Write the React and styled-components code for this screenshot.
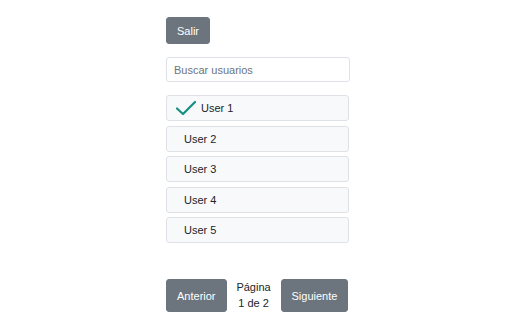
import React from "react";
import styled, { createGlobalStyle } from "styled-components";

const GlobalStyle = createGlobalStyle`
  body {
    margin: 0;
    background: #fff;
    font-family: "Liberation Sans", Arial, sans-serif;
    color: #212529;
  }
`;

const Page = styled.div`
  display: flex;
  justify-content: center;
  padding: 17px 0 0 4px;
`;

const Column = styled.div`
  width: 184px;
  display: flex;
  flex-direction: column;
  align-items: flex-start;
`;

const Button = styled.button`
  height: ${(p) => p.tall ? "33px" : "27px"};
  padding: 0 10px;
  background: #6c757d;
  color: #fff;
  border: 1px solid #6c757d;
  border-radius: 3px;
  font-family: inherit;
  font-size: 11px;
`;

const Search = styled.input`
  box-sizing: border-box;
  width: 184px;
  height: 25px;
  margin-top: 13px;
  padding: 0 7px;
  border: 1px solid #dee2e6;
  border-radius: 3px;
  font-family: inherit;
  font-size: 11px;
  &::placeholder {
    color: #6c757d;
  }
`;

const List = styled.ul`
  list-style: none;
  margin: 13px 0 0;
  padding: 0;
  width: 183px;
  display: flex;
  flex-direction: column;
  gap: 4.5px;
`;

const Item = styled.li`
  box-sizing: border-box;
  height: 26px;
  display: flex;
  align-items: center;
  gap: 4px;
  padding-left: ${(p) => p.selected ? "8px" : "17px"};
  background: #f8f9fa;
  border: 1px solid #dee2e6;
  border-radius: 3px;
  font-size: 11px;
`;

const Pager = styled.div`
  display: flex;
  align-items: center;
  margin-top: 36px;
`;

const PageLabel = styled.div`
  width: 54px;
  text-align: center;
  font-size: 11px;
  line-height: 16px;
  margin-top: -2px;
`;

const Check = () => (
  <svg width="22" height="18" viewBox="0 0 22 18" fill="none">
    <path d="M2 9.5 L8 15 L20 3" stroke="#138f83" strokeWidth="2.2" strokeLinecap="round" strokeLinejoin="round" />
  </svg>
);

const users = ["User 1", "User 2", "User 3", "User 4", "User 5"];

export default function App() {
  return (
    <>
      <GlobalStyle />
      <Page>
        <Column>
          <Button>Salir</Button>
          <Search placeholder="Buscar usuarios" />
          <List>
            {users.map((u, i) => (
              <Item key={u} selected={i === 0}>
                {i === 0 && <Check />}
                {u}
              </Item>
            ))}
          </List>
          <Pager>
            <Button tall>Anterior</Button>
            <PageLabel>Página<br />1 de 2</PageLabel>
            <Button tall>Siguiente</Button>
          </Pager>
        </Column>
      </Page>
    </>
  );
}
